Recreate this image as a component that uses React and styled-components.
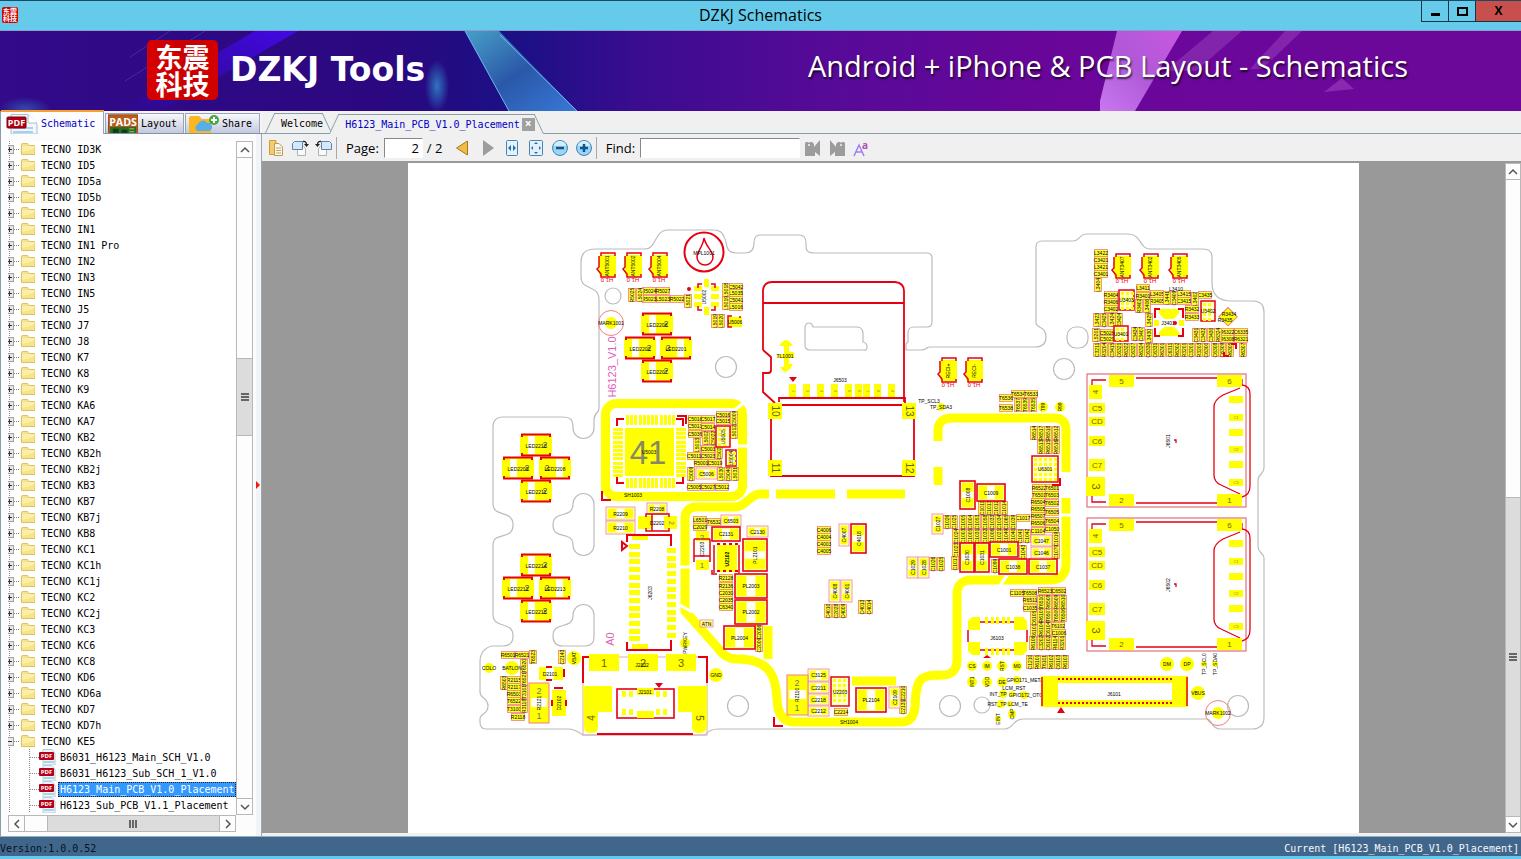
import React from "react";
import styled, { createGlobalStyle, css } from "styled-components";

const MONO = '"DejaVu Sans Mono", "Liberation Mono", monospace';
const UI = '"Open Sans", "Noto Sans", sans-serif';
const CJK = '"Noto Sans CJK SC", sans-serif';
const Y = "#ffff00";
const RED = "#e60012";
const PINK = "#f08080";

const Global = createGlobalStyle`
  * { box-sizing: border-box; }
  body { margin: 0; font: 10px ${MONO}; color: #000; background: #64c9ec; }
  button { font: inherit; color: inherit; border: 0; padding: 0; background: none; }
  ul { list-style: none; margin: 0; padding: 0; }
  h1, h2, p { margin: 0; font-weight: 400; }
`;

/* ---------- window frame ---------- */

const Window = styled.div`
  display: flex;
  flex-direction: column;
  height: 100vh;
  min-height: 480px;
  overflow: hidden;
`;

const TitleBar = styled.header`
  display: grid;
  grid-template-columns: 100px 1fr 100px;
  height: 31px;
  flex: none;
  border-top: 1px solid #1c4a66;
  border-bottom: 1px solid #8a9cc8;
  background: #66cbeb;
`;

const Seal = styled.span`
  display: flex;
  flex-wrap: wrap;
  align-content: center;
  justify-content: center;
  width: ${(p) => p.$size}px;
  height: ${(p) => p.$height}px;
  border-radius: ${(p) => p.$radius}px;
  background: linear-gradient(90deg, #d80000, #c80000 60%, #d40000);
  color: #fff;
  font: 700 ${(p) => p.$font}px/${(p) => p.$line}px ${CJK};
  text-align: center;
  padding: 0 ${(p) => p.$pad}px;
`;

const AppMark = styled.div`
  padding: 6px 0 0 2px;
`;

const WindowTitle = styled.h1`
  font: 16px/29px ${UI};
  text-align: center;
`;

const WindowButtons = styled.div`
  display: flex;
  height: 21px;
`;

const WindowButton = styled.button`
  flex: ${(p) => (p.$close ? "1" : "0 0 27px")};
  display: flex;
  align-items: center;
  justify-content: center;
  border: 1px solid #143448;
  border-width: 0 0 1px 1px;
  background: ${(p) => (p.$close ? "#c7504c" : "transparent")};
  font: 700 12px/18px ${UI};
`;

const Banner = styled.section`
  position: relative;
  flex: none;
  display: flex;
  align-items: center;
  height: 80px;
  padding: 0 113px 2px 147px;
  background: linear-gradient(90deg, #320a8a 0, #2b0880 25%, #1b1085 34%, #3a0c90 42%, #560a98 54%, #6a069a 70%, #6c0899 100%);
  color: #fff;
  overflow: hidden;
`;

const BannerArt = styled.svg`
  position: absolute;
  inset: 0;
  width: 100%;
  height: 100%;
`;

const Brand = styled.h2`
  position: relative;
  margin: 0 auto 0 12px;
  font: 700 33px/78px "DejaVu Sans", sans-serif;
`;

const Slogan = styled.p`
  position: relative;
  font: 29px/70px ${UI};
  height: 78px;
  text-shadow: 1px 2px 2px rgba(0, 0, 0, 0.7);
  white-space: nowrap;
`;

const SealHolder = styled.div`
  position: relative;
`;

const Workspace = styled.main`
  flex: 1;
  min-height: 0;
  display: grid;
  grid-template-columns: 256px 6px minmax(0, 1fr);
  background: #f0f0f0;
`;

const StatusBar = styled.footer`
  flex: none;
  display: flex;
  justify-content: space-between;
  height: 23px;
  padding: 4px 2px 0 0;
  border-top: 1px solid #8fb0c4;
  border-bottom: 3px solid #64c9ec;
  background: #41668c;
  line-height: 16px;
  color: #06121e;
`;

const StatusDocument = styled.span`
  color: #f4f8fc;
`;

/* ---------- scroll bars ---------- */

const ScrollBar = styled.div`
  display: flex;
  flex-direction: ${(p) => (p.$horizontal ? "row" : "column")};
  ${(p) => (p.$horizontal ? "height" : "width")}: ${(p) => p.$thick}px;
  border: 1px solid #b8b8b8;
  background: #fdfdfd;
`;

const ScrollArrow = styled.button`
  flex: 0 0 16px;
  display: flex;
  align-items: center;
  justify-content: center;
  border: 0 solid #b8b8b8;
  ${(p) =>
    ({
      up: css`border-bottom-width: 1px;`,
      down: css`border-top-width: 1px;`,
      left: css`border-right-width: 1px;`,
      right: css`border-left-width: 1px;`,
    })[p.$dir]}
`;

const ScrollSpace = styled.span`
  flex: ${(p) => p.$grow} 1 0;
`;

const ScrollThumb = styled.span`
  flex: ${(p) => p.$grow} 1 0;
  display: flex;
  align-items: center;
  justify-content: center;
  background: #dcdcdc;
  outline: 1px solid #b8b8b8;
`;

const turn = { up: 0, right: 90, down: 180, left: 270 };

function Arrow({ dir }) {
  return (
    <ScrollArrow $dir={dir} aria-label={`Scroll ${dir}`}>
      <svg width="10" height="10" viewBox="0 0 10 10">
        <path d="M1 7 5 3 9 7" fill="none" stroke="#555" strokeWidth="1.5" transform={`rotate(${turn[dir]} 5 5)`} />
      </svg>
    </ScrollArrow>
  );
}

function Scroller({ horizontal, thick = 17, before, thumb, after }) {
  return (
    <ScrollBar $horizontal={horizontal} $thick={thick}>
      <Arrow dir={horizontal ? "left" : "up"} />
      {before > 0 && <ScrollSpace $grow={before} />}
      <ScrollThumb $grow={thumb}>
        <svg width="8" height="8" viewBox="0 0 8 8">
          <path d={horizontal ? "M1 0V8M4 0V8M7 0V8" : "M0 1H8M0 4H8M0 7H8"} stroke="#666" strokeWidth="2" />
        </svg>
      </ScrollThumb>
      {after > 0 && <ScrollSpace $grow={after} />}
      <Arrow dir={horizontal ? "right" : "down"} />
    </ScrollBar>
  );
}

/* ---------- left panel ---------- */

const SidePanel = styled.aside`
  display: flex;
  flex-direction: column;
  min-height: 0;
  border-left: 1px solid #8a9ca8;
  background: #fcfcfc;
`;

const SideTabs = styled.div`
  display: flex;
  align-items: flex-end;
  gap: 1px;
  height: 23px;
  flex: none;
  margin-right: -6px;
  border-bottom: 1px solid #8096a8;
  background: #f4f4f8;
`;

const SideTab = styled.button`
  position: relative;
  display: flex;
  align-items: center;
  gap: 3px;
  height: ${(p) => (p.$active ? 23 : 20)}px;
  width: ${(p) => p.$width}px;
  padding-left: ${(p) => (p.$active ? 5 : 2)}px;
  border: 1px solid #9aa4b8;
  border-bottom: 0;
  background: linear-gradient(#f8f8fc, #c4c8dc);
  overflow: hidden;
  white-space: nowrap;
  ${(p) =>
    p.$active &&
    css`
      border: 0;
      border-top: 2px solid #f5a030;
      border-right: 1px solid #9aa4b8;
      background: #fcfcff;
      color: #0000c8;
      margin-bottom: -1px;
      height: 24px;
    `}
`;

const TreeArea = styled.div`
  flex: 1;
  min-height: 0;
  display: grid;
  grid-template-columns: minmax(0, 1fr) 17px;
  grid-template-rows: minmax(0, 1fr) 17px;
  margin: 7px 3px 4px 7px;
`;

const Tree = styled.ul`
  overflow: hidden;
  background: #fff;
`;

const TreeRow = styled.li`
  display: flex;
  align-items: center;
  height: 16px;
  padding-left: ${(p) => (p.$child ? 20 : 0)}px;
  background: repeating-linear-gradient(#888 0 1px, transparent 1px 2px) 1px 0 / 1px 100% no-repeat;
`;

const TreeLabel = styled.button`
  height: 15px;
  padding: 0 1px 0 2px;
  margin-left: ${(p) => (p.$child ? 0 : 4)}px;
  line-height: 15px;
  white-space: nowrap;
  ${(p) =>
    p.$selected &&
    css`
      background: #3399ff;
      color: #fff;
      outline: 1px dotted #222;
      outline-offset: -1px;
    `}
`;

const Splitter = styled.div`
  display: flex;
  align-items: center;
  margin-top: 23px;
  background: #f2f4f8;
  border-right: 1px solid #98a8b4;
`;

const names =
  "ID3K,ID5,ID5a,ID5b,ID6,IN1,IN1 Pro,IN2,IN3,IN5,J5,J7,J8,K7,K8,K9,KA6,KA7,KB2,KB2h,KB2j,KB3,KB7,KB7j,KB8,KC1,KC1h,KC1j,KC2,KC2j,KC3,KC6,KC8,KD6,KD6a,KD7,KD7h,KE5".split(",");
const files = [
  "B6031_H6123_Main_SCH_V1.0",
  "B6031_H6123_Sub_SCH_1_V1.0",
  "H6123_Main_PCB_V1.0_Placement",
  "H6123_Sub_PCB_V1.1_Placement",
];

function FolderIcon({ open }) {
  return (
    <svg width="27" height="16" viewBox="0 0 27 16">
      <rect x="-3.500" y="4.500" width="9" height="8" fill="#e8e8e8" stroke="#a0a0a0" />
      <path d={open ? "M0 8.500H4" : "M0 8.500H4M1.500 6V11"} stroke="#333" />
      <path d="M6 8.500H12" stroke="#888" strokeDasharray="1 1" />
      <path d="M13.500 3.500q0-1 1-1H19q1 0 1.500 1l.5 1h5q1 0 1 1v8H13.500Z" fill="#f6e488" stroke="#dcc464" />
      <path d="M14.500 5H26V8L14.500 11Z" fill="#fff4b8" opacity=".7" />
    </svg>
  );
}

function PdfFileIcon({ large }) {
  return large ? (
    <svg width="32" height="21" viewBox="0 0 32 21">
      <path d="M5 1.500H22L31 11V21H5Z" fill="#f3f7fb" stroke="#a8c0d0" />
      <path d="M22 1.500V10H31" fill="#fff" stroke="#a8c0d0" />
      <path d="M7 15H27M7 19H27" stroke="#a6d0f0" strokeWidth="2" />
      <rect x="1" y="4" width="19" height="11" rx="1" fill="#b40012" stroke="#7c0010" />
      <text x="10.500" y="13" fontSize="9" fontWeight="700" textAnchor="middle" fill="#fff" fontFamily="Open Sans">PDF</text>
    </svg>
  ) : (
    <svg width="30" height="16" viewBox="0 0 30 16">
      <path d="M1.500 0V16M2 8.500H12" stroke="#888" strokeDasharray="1 1" />
      <path d="M15 .5H24L27 4V16H15Z" fill="#eaf4fa" stroke="#b4ccd8" />
      <path d="M16 13H26" stroke="#a8d4f0" strokeWidth="2" />
      <rect x="11" y="3" width="15" height="8" rx="1" fill="#b80014" />
      <text x="18.500" y="9" fontSize="6" fontWeight="700" textAnchor="middle" fill="#fff" fontFamily="Open Sans">PDF</text>
    </svg>
  );
}

function PadsIcon() {
  return (
    <svg width="30" height="20" viewBox="0 0 31 20">
      <rect x=".5" y=".5" width="30" height="20" fill="#b85c1c" stroke="#98501c" />
      <rect x="2" y="13" width="27" height="7" fill="#2c6c24" />
      <path d="M5 15H11V20H5ZM14 16H20V20H14Z" fill="#123c14" />
      <path d="M22 15H27M22 18H27" stroke="#a0cc50" />
      <text x="15.500" y="12" fontSize="11" fontWeight="700" textAnchor="middle" fill="#fff" fontFamily="Open Sans">PADS</text>
    </svg>
  );
}

function CloudFolderIcon() {
  return (
    <svg width="31" height="20" viewBox="0 0 31 20">
      <path d="M1 4q0-2 2-2h8l3 3h7q2 0 2 2v13H1Z" fill="#fcb720" />
      <path d="M9 17a4 4 0 0 1 1-7 5 5 0 0 1 9-1 4 4 0 0 1 2 8Z" fill="#58aee8" />
      <circle cx="26" cy="6" r="5" fill="#48a840" />
      <path d="M26 3V9M23 6H29" stroke="#fff" strokeWidth="2" />
    </svg>
  );
}

/* ---------- document area ---------- */

const DocArea = styled.section`
  display: flex;
  flex-direction: column;
  min-height: 0;
  margin-bottom: 3px;
`;

const DocTabs = styled.div`
  display: flex;
  align-items: flex-end;
  height: 23px;
  flex: none;
  padding-left: 3px;
  border-bottom: 1px solid #8aa0a8;
`;

const DocTab = styled.button`
  position: relative;
  isolation: isolate;
  display: flex;
  align-items: center;
  gap: 2px;
  height: 20px;
  padding: 1px 9px 0 16px;
  margin-left: ${(p) => (p.$active ? -3 : 0)}px;
  margin-bottom: ${(p) => (p.$active ? -1 : 0)}px;
  color: ${(p) => (p.$active ? "#0000c8" : "#000")};
  white-space: nowrap;

  &::before,
  &::after {
    content: "";
    position: absolute;
    z-index: -1;
    top: 0;
    bottom: 0;
    width: 52%;
    border-top: 1px solid #8aa0a8;
    background: #f0f0f0;
    transform-origin: bottom;
  }
  &::before {
    left: 0;
    border-left: 1px solid #8aa0a8;
    transform: skewX(-25deg);
  }
  &::after {
    right: 0;
    border-right: 1px solid #8aa0a8;
    transform: skewX(25deg);
  }
`;

const CloseMark = styled.span`
  width: 13px;
  height: 13px;
  background: #a0a0a0;
  color: #fff;
  font: 700 12px/12px ${UI};
  text-align: center;
`;

const ToolBar = styled.div`
  display: flex;
  align-items: center;
  flex: none;
  height: 29px;
  padding-left: 2px;
  border-bottom: 2px solid #999;
  background: #f0f0f0;
  font: 13px/20px ${UI};
`;

const ToolButton = styled.button`
  display: flex;
  align-items: center;
  justify-content: center;
  width: 24px;
  height: 24px;
`;

const Divider = styled.span`
  width: 1px;
  height: 22px;
  background: #a8a8a8;
  margin-right: 9px;
`;

const Field = styled.label`
  display: flex;
  align-items: center;
  gap: 5px;
`;

const TextBox = styled.input`
  width: ${(p) => p.$width}px;
  height: 20px;
  padding: 0 3px;
  border: 1px solid #888;
  border-right-color: #fff;
  border-bottom-color: #fff;
  background: #fff;
  font: 13px/18px ${UI};
  text-align: ${(p) => (p.$right ? "right" : "left")};
`;

const PageCount = styled.span`
  width: 27px;
  padding-left: 4px;
`;

const Gap = styled.span`
  width: ${(p) => p.$w}px;
`;

const Viewer = styled.div`
  flex: 1;
  min-height: 0;
  display: flex;
  background: #999;
`;

const Sheet = styled.div`
  flex: 1;
  min-width: 0;
  margin: 0 146px;
  background: #fff;
  overflow: hidden;
`;

const Drawing = styled.svg`
  display: block;
  width: 100%;
  font-family: "Liberation Sans Narrow", "Liberation Sans", sans-serif;
`;

/* ---------- tool bar icons ---------- */

const I = ({ children }) => (
  <svg width="18" height="18" viewBox="0 0 18 18">
    {children}
  </svg>
);
const pageBox = { fill: "#e4f1fb", stroke: "#4684b4" };

const CopyIcon = () => (
  <I>
    <path d="M2.500 1.500H9V15.500H2.500Z" fill="#f4cc70" stroke="#d09c38" />
    <path d="M7.500 4.500H12L15.500 8V16.500H7.500Z" fill="#fbf7e4" stroke="#b89c58" />
    <path d="M9 9H14M9 11.500H14M9 14H14" stroke="#c0a468" />
  </I>
);
const TurnIcon = ({ flip }) => (
  <I>
    <g transform={flip ? "matrix(-1 0 0 1 18 0)" : undefined}>
      <path d="M6.500 7.500H12.500L14.500 9.500V16.500H6.500Z" fill="#fafafa" stroke="#b0b0b0" />
      <path d="M3.500 2.500H11.500V10.500H1.500V4.500Z" fill="#d6e8f8" stroke="#5c84ac" />
      <path d="M12 2.500Q15.500 2 15.500 6" fill="none" stroke="#222" strokeWidth="1.300" />
      <path d="M13 5H18L15.500 8Z" fill="#222" />
    </g>
  </I>
);
const FitIcon = ({ all }) => (
  <I>
    <rect x={all ? 2.500 : 3.500} y="1.500" width={all ? 13 : 11} height="15" rx="1" {...pageBox} />
    {all ? (
      <path d="M7 5 9 3 11 5ZM7 13 9 15 11 13ZM6 7 4 9 6 11ZM12 7 14 9 12 11Z" fill="#286ca4" />
    ) : (
      <path d="M8 6 5 9 8 12ZM10 6 13 9 10 12Z" fill="#286ca4" />
    )}
  </I>
);
const ZoomIcon = ({ plus }) => (
  <I>
    <circle cx="9" cy="9" r="7.500" fill="#9cd2f4" stroke="#3c88b8" />
    <path d="M3 7a6 5 0 0 1 12 0Z" fill="#d4eefc" />
    <path d={plus ? "M5 9H13M9 5V13" : "M5 9H13"} stroke="#0c5890" strokeWidth="2.500" />
  </I>
);
const BinocularIcon = ({ flip }) => (
  <I>
    <g transform={flip ? "matrix(-1 0 0 1 18 0)" : undefined} fill="#9c9c9c">
      <path d="M1 4 2 3H4L5 4 6 3H8L10 5V8L16 1V17L11 13V17H1Z" />
      <circle cx="5" cy="6" r="1" fill="#f0f0f0" />
    </g>
  </I>
);

/* ---------- board drawing ---------- */

const T = ({ x, y, s = 5, r = 0, fill = "#000", w = 400, children }) => (
  <text x={x} y={y} fontSize={s} fontWeight={w} fill={fill} textAnchor="middle" dominantBaseline="central" transform={r ? `rotate(${r} ${x} ${y})` : undefined}>
    {children}
  </text>
);
const P = ({ x, y, w, h, rx = 0 }) => <rect x={x} y={y} width={w} height={h} rx={rx} fill={Y} />;
const Red = ({ d, w = 1.500, fill = "none" }) => <path d={d} fill={fill} stroke={RED} strokeWidth={w} />;

/* small passives: "x,y,label" separated by blanks */
const parse = (s) => s.trim().split(/\s+/).map((e) => e.split(","));

const flat = parse(`649,291,R5024 663,291,R5027 649,299,R5023 663,299,L5023 677,299,R5022 736,287,C5042 736,293,L5035 736,300,C5041 736,307,L5016
695,419,C5018 708,419,C5017 723,415,C5016 723,421,C5015 695,426,C5013 708,427,C5014 695,434,C5036 708,449,C5003 694,456,C5011 708,456,C5023
701,463,R5001 715,463,C5019 694,487,C5005 708,487,C5027 722,487,C5012
1101,253,L3422 1101,260,C3421 1101,267,L3421 1101,274,C3401 1111,295,R3404 1111,302,R3406 1111,309,C3402 1143,288,L3411 1143,296,R3401 1157,294,L3405 1157,301,R3405
1184,294,L3415 1184,301,C3415 1205,295,C3435 1192,309,R3432 1192,317,R3433 1107,333,C5028 1107,339,C5029 1227,332,R6322 1241,332,C6335 1227,339,R6308 1241,339,R6321
1018,394,T6534 1031,394,T6533 1006,398,T6536 1006,408,T6538 1039,488,R6522 1052,488,T6501 1039,495,T6501 1052,495,T6503 1038,502,R6504 1052,503,T6502
1038,509,R6505 1052,512,T6505 1038,516,R6507 1052,521,T6504 1038,523,R6506 1038,531,C1104 1052,529,C1050 1023,518,C1017
824,530,C4006 824,537,C4004 824,544,C4003 824,551,C4005 1030,593,T6508 1017,593,C1105 1045,591,R6523 1059,591,C6502 1030,600,R6511 1030,608,C1035 1058,626,T6102 1059,633,C1006
700,520,L6501 700,527,C2029 714,522,T6532 726,578,R2128 726,586,R2136 726,593,C2030 726,600,C2035 726,607,C6340
508,655,R6501 522,655,R6521 514,680,R2115 514,687,R2117 514,694,R6503 514,701,T6522 514,709,T3100 518,717,R2118 841,712,C2214`);

const row = (y, xs, labels) => labels.split(" ").map((l, i) => [xs[i], y, l]);
const step = (x, d, n) => Array.from({ length: n }, (_, i) => Math.round(x + d * i));

const upright = [
  ...parse(`632,295,R5025 640,295,L5024 688,301,L5021 726,290,L5018 726,303,L5019 715,321,L5019 721,321,L5020
697,445,L5013 706,438,L5002 713,438,C5022 734,418,C5009 734,432,L5012 719,452,C5025 691,474,C5009 721,474,L5030 728,474,C5040 735,474,L5031
1098,285,L3404 1139,306,R3402 1147,306,L3406 1167,298,L3441 1174,298,C3409 1195,299,L3402 1097,320,L3423 1104,320,C3425 1112,320,L3424 1119,320,C3424 1149,320,L3425
1096,335,L5201 1135,334,C3434 1141,334,C3407 1149,336,L3430 1196,335,C3431 1203,335,C3432 1211,335,C3430 1218,335,R6324 1215,350,C6308 1222,350,C6309 1230,350,R6305 1243,350,R6307
1018,405,T6537 1025,405,T6539 1033,405,T6535 1034,433,R6514 1041,433,R6517 1048,433,R6518 1056,433,R6512 1041,447,R6513 1048,447,R6515 1056,447,R6516
1013,522,C1039 1013,536,C1040 1020,536,C1041 1027,536,C1042 1056,539,C1019 1056,552,C1079 1023,552,C1043 995,566,C1099
947,522,C1026 954,522,C1025 956,536,C1024 956,550,C1023 955,563,C1017 933,564,C1026 941,564,C1025
828,611,C4010 836,611,C2028 843,611,C4009 862,607,C4013 869,607,C4014
1034,618,C6105 1034,631,C6101 759,632,C2086 759,645,C2009 533,657,T6523 562,657,C2143 524,666,T6520 524,679,T6521 504,683,R6503 524,692,T3101 524,706,R3118 903,707,C2131 903,693,C2210`),
  ...row(350, step(1097, 7.25, 16), "C3211 R3204 C3415 C6321 R6322 C6327 R6324 C6330 C6331 R6301 C6311 R6302 R3201 C3201 R3203 C6300"),
  ...row(508, step(982, 7.2, 4), "C1011 C1013 C1012 C1014"),
  ...row(522, step(963, 7.2, 7), "C1005 C1004 C1053 C1058 C1033 C1034 C1065"),
  ...row(536, step(963, 7.2, 7), "C1003 C1005 C1031 C1032 C1006 C1021 C1049"),
  ...row(602, [1041, 1048, 1056, 1063], "T6510 R6508 R6509 R6510"),
  ...row(615, [1041, 1048, 1056, 1063], "R6105 T6507 T6509 T6506"),
  ...row(629, [1041, 1048], "R6104 C6104"),
  ...row(643, [1033, 1041, 1048, 1055, 1062], "R6106 C3202 C6102 R6114 R3201"),
  ...row(662, step(1030, 7, 6), "C1210 R6101 T6101 R6102 C6103 R6103"),
];

/* labelled two-terminal parts: x, y, w, h, label, outline, upright */
const blocks = [
  [696, 468, 21, 11, "C5006", 0, 0], [606, 507, 29, 13, "R2209", 0, 0], [606, 521, 29, 13, "R2210", 0, 0],
  [647, 503, 20, 11, "R2208", 0, 0], [721, 515, 20, 11, "C6503", 0, 0], [712, 527, 28, 14, "C2131", 1, 0],
  [747, 526, 21, 11, "C2130", 0, 0], [743, 539, 24, 32, "PL2101", 1, 1], [735, 574, 32, 24, "PL2003", 1, 0],
  [735, 600, 32, 24, "PL2002", 1, 0], [724, 626, 31, 23, "PL2004", 1, 0], [960, 481, 15, 28, "C1008", 1, 1],
  [977, 484, 28, 17, "C1009", 1, 0], [932, 514, 11, 20, "C1027", 0, 1], [839, 524, 10, 22, "C4007", 0, 1],
  [851, 524, 15, 29, "C4018", 1, 1], [907, 557, 11, 21, "C1029", 0, 1], [918, 557, 11, 21, "C1028", 0, 1],
  [829, 580, 11, 22, "C4008", 0, 1], [841, 580, 11, 22, "C4001", 0, 1], [960, 543, 14, 29, "C1030", 1, 1],
  [975, 543, 14, 29, "C1031", 1, 1], [990, 542, 28, 15, "C1001", 1, 0], [999, 559, 28, 15, "C1038", 1, 0],
  [1029, 559, 28, 15, "C1037", 1, 0], [1031, 535, 21, 11, "C1047", 0, 0], [1031, 547, 21, 11, "C1046", 0, 0],
  [808, 669, 21, 12, "C3125", 0, 0], [808, 682, 21, 11, "C2211", 0, 0], [808, 694, 21, 11, "C2218", 0, 0],
  [808, 706, 21, 10, "C2212", 0, 0], [856, 688, 30, 24, "PL2104", 1, 0], [889, 687, 11, 21, "C2109", 0, 1],
  [700, 620, 13, 7, "ATN", 0, 0],
];

const dots = [
  [1043, 407, 5, "T99", 1], [1060, 407, 5, "R99", 1], [972, 666, 5, "CS"], [987, 666, 5, "IM"], [1002, 666, 5, "RST", 1], [1017, 666, 5, "M0"],
  [972, 682, 5, "INT1", 1], [987, 682, 5, "VDD", 1], [1002, 682, 5, "DE"], [1167, 664, 7, "DM"], [1187, 664, 7, "DP"], [1198, 693, 7, "VBUS"],
  [716, 675, 7, "GND"], [574, 658, 7, "VBAT", 1], [489, 668, 5, "COLO"], [512, 668, 7, "BATLON"], [685, 643, 5, "PWRKEY", 1],
  [1204, 664, 3, "TP_SCL0", 1], [1215, 664, 3, "TP_SDA0", 1], [1012, 714, 4, "CMP", 1], [998, 719, 3, "EINT", 1], [941, 407, 4, "TP_SDA3"],
  [1017, 680, 4, ""], [1012, 694, 3, ""], [1003, 694, 4, ""], [1024, 695, 4, ""], [1001, 704, 4, ""], [1010, 704, 3, ""],
];

const captions = [
  [929, 401, "TP_SCL3"], [1025, 680, "GPIO171_META"], [1014, 688, "LCM_RST"], [998, 694, "INT_TP"],
  [1026, 695, "GPIO172_OTG"], [997, 704, "RST_TP"], [1018, 704, "LCM_TE"], [1176, 289, "L3410"],
];

const leds = [
  [657, 324, "LED2206"], [640, 348, "LED2202"], [676, 348, "LED2201"], [657, 371, "LED2207"],
  [536, 445, "LED2210"], [518, 468, "LED2209"], [555, 468, "LED2208"], [536, 491, "LED2211"],
  [536, 565, "LED2214"], [518, 588, "LED2212"], [555, 588, "LED2213"], [536, 611, "LED2215"],
];

const antennas = [
  [607, 265, "ANT5001"], [633, 265, "ANT5002"], [659, 265, "ANT5004"], [1122, 266, "ANT3407"], [1150, 266, "ANT3402"], [1179, 266, "ANT3405"],
  [948, 370, "RECI+"], [974, 370, "RECI-"],
];

function Led({ x, y, label, mirror }) {
  return (
    <g>
      <P x={x - 16} y={y - 10} w={32} h={20} rx={2} />
      <rect x={mirror ? x + 1 : x - 8} y={y - 9} width={7} height={18} fill="#fffff0" />
      <Red d={`M${x - 14} ${y - 8}V${y - 10.5}H${x + 14}V${y - 8}M${x - 14} ${y + 8}V${y + 10.5}H${x + 14}V${y + 8}`} w={2} />
      <T x={x + (mirror ? -8 : 9)} y={y} s={9} fill="#555">2</T>
      <T x={x} y={y + 1}>{label}</T>
    </g>
  );
}

function Antenna({ x, y, label }) {
  return (
    <g>
      <P x={x - 8} y={y - 10} w={17} h={21} rx={2} />
      <Red d={`M${x - 6} ${y - 9}V${y - 12}H${x + 8}V${y - 9}M${x - 8} ${y - 9}V${y + 2}L${x - 10} ${y + 4}L${x - 6} ${y + 9}V${y + 12}H${x + 8}V${y + 9}`} />
      <T x={x} y={y + 1} r={-90}>{label}</T>
      <T x={x} y={y + 15} r={180} s={6} fill={RED}>H1.0</T>
    </g>
  );
}

function Chip({ x, y, w, h, label, r }) {
  const cols = step(x + 3, 5, Math.floor(w / 5));
  return (
    <g>
      <rect x={x} y={y} width={w} height={h} fill="#ffffd0" stroke={RED} strokeWidth="1.500" />
      {cols.map((c) => step(y + 3, 5, Math.floor(h / 5)).map((q) => <P key={`${c}-${q}`} x={c - 1} y={q - 1} w={3} h={3} />))}
      <T x={x + w / 2} y={y + h / 2} r={r}>{label}</T>
    </g>
  );
}

function Socket({ y, label }) {
  const pads = [
    [22, 1, 25, 12, "5"], [130, 1, 25, 12, "6"], [2, 11, 13, 14, "4", -90], [2, 29, 16, 10, "C5"], [2, 43, 16, 9, "CD"], [2, 62, 16, 10, "C6"],
    [2, 85, 16, 12, "C7"], [-1, 103, 19, 19, "3", 90], [22, 120, 25, 12, "2"], [130, 120, 25, 12, "1"],
  ];
  return (
    <g transform={`translate(1087 ${y})`}>
      <rect x="0" y="0" width="159" height="133" fill="none" stroke="#e05060" />
      <Red d="M49 4H130M49 129H130M5 11V6H19M5 122V128H19M153 14 136 21Q127 26 127 33V101Q127 108 134 111L153 120M155 5V11Q163 12 163 20V112Q163 121 155 123M87 66H89V69" w={1.3} />
      {pads.map(([a, b, w, h, l, r]) => (
        <g key={l}>
          <P x={a} y={b} w={w} h={h} />
          <T x={a + w / 2} y={b + h / 2} s={h > 18 ? 11 : 8} r={r} fill="#776600">{l}</T>
        </g>
      ))}
      {[25, 43, 58, 75, 90, 108].map((c, i) => (
        <g key={c}>
          <P x={142} y={c - 3} w={14} h={7} />
          {i % 2 === 1 && <T x={149} y={c} s={4} fill="#886">{`C${(i + 1) / 2}`}</T>}
        </g>
      ))}
      <T x={81} y={67} r={-90}>{label}</T>
    </g>
  );
}

function Board() {
  return (
    <Drawing viewBox="408 163 951 671" role="img" aria-label="H6123 main board placement">
      <g fill="none" stroke="#bcbcbc" strokeWidth="1.200">
        <path d="M486 729H570Q576 730 583 735H705Q710 729 718 729H1005C1013 729 1013 719 1023 719H1207C1212 719 1211 729 1220 729H1252Q1264 729 1264 717V558C1264 553 1258 553 1258 547V480C1258 474 1264 474 1264 468V312Q1264 301 1253 301H1232Q1212 301 1212 283V257Q1212 249 1203 249H1150C1139 249 1142 234 1128 234H1087C1079 234 1080 241 1073 241H1042Q1036 241 1036 247V323C1036 328 1046 326 1046 337Q1046 347 1035 347H930C926 347 927 350 921 350H906V344L908 342V333Q908 327 914 327H927Q932 327 932 322V258Q932 253 927 253H815C805 253 806 249 806 243Q806 235 799 235H760Q754 235 754 243 754 253 745 253H736C724 253 728 242 724 237Q722 230 714 230H668C654 230 657 249 645 249H595Q581 249 581 262V277C581 291 599 284 599 300V408C599 414 594 412 594 420V428A10.500 10.500 0 0 1 573 428C573 420 571 417 562 417H503Q493 417 493 427V504C493 518 513 509 513 525S493 531 493 545V614C493 630 513 620 513 636Q513 646 503 646H492Q480 649 480 662V692C480 699 488 697 488 706S480 713 480 719V722Q480 729 486 729Z" />
        <path d="M594 504V545A10.500 10.500 0 0 1 573 545C573 530 553 541 553 525S573 520 573 504A10.500 10.500 0 0 1 594 504Z" />
        <path d="M594 615V637Q594 646 585 646H563Q553 646 553 636C553 620 573 631 573 615A10.500 10.500 0 0 1 594 615Z" />
        <path d="M805 345V327Q806 323 809 323T813 327H857Q863 327 863 334V342Q867 343 867 347T863 350H810Q805 350 805 345Z" />
        <rect x="1067" y="327" width="21" height="21" rx="9" />
        {[[613, 296, 8], [726, 367, 10.5], [738, 706, 10.5], [950, 706, 10.5], [982, 705, 8], [1238, 706, 10.5], [1064, 369, 10.5]].map(([x, y, r]) => (
          <circle key={x} cx={x} cy={y} r={r} />
        ))}
      </g>

      <g fill="none" stroke={Y} strokeWidth="9">
        <rect x="605.500" y="403.500" width="137" height="93" rx="11" />
        <path d="M769 494H760C750 494 746 507 735 507H697Q685 507 685 519V611L717 647Q725 659 737 659C770 659 776 676 777 700Q778 722 795 722H901Q914 722 915 706C916 680 920 675 937 675Q957 677 957 660V594Q957 580 972 580H1050Q1066 580 1066 564V498M1066 472V430Q1066 418 1054 418H952Q938 418 938 431V441M938 467V485M776 494H835M847 494H905M768 626V659" />
        <path d="M852 681H896" />
      </g>
      <path d="M732 412 749 399M737 446H750M679 567H692M678 604 692 612M998 588 1009 573M930 478 934 488M1060 515H1072" stroke="#fff" strokeWidth="3" />

      <circle cx="704" cy="252" r="19.500" fill="none" stroke={RED} strokeWidth="2" />
      <path d="M704 238C706 247 713 251 713 257A8 8 0 0 1 697 257C697 251 703 247 704 238Z" fill="none" stroke={RED} strokeWidth="1.500" />
      <T x={704} y={253}>MPL1001</T>
      {[[611, 323, "MARK1001"], [1218, 713, "MARK1002"]].map(([x, y, l]) => (
        <g key={l}>
          <circle cx={x} cy={y} r="12.500" fill="none" stroke={PINK} />
          <circle cx={x} cy={y} r="6" fill={Y} />
          <T x={x} y={y}>{l}</T>
        </g>
      ))}
      <T x={612} y={367} r={-90} s={11} fill="#e060b8">H6123_V1.0</T>
      <T x={610} y={639} r={-90} s={11} fill="#e060b8">A0</T>

      {leds.map(([x, y, l], i) => <Led key={l} x={x} y={y} label={l} mirror={i % 4 === 2} />)}
      {antennas.map(([x, y, l]) => <Antenna key={l} x={x} y={y} label={l} />)}

      {/* U5003 and its pin ring */}
      <P x={625} y={428} w={49} h={48} />
      {step(628, 4.2, 12).map((x) => <g key={x}><P x={x - 2} y={415} w={3} h={10} /><P x={x - 2} y={478} w={3} h={10} /></g>)}
      {step(429, 4.2, 12).map((y) => <g key={y}><P x={613} y={y - 1} w={10} h={3} /><P x={676} y={y - 1} w={10} h={3} /></g>)}
      <Red d="M617 426V419H624M676 419H683V426M617 477V483H624M676 483H683V477M677 416H686V424" w={2} />
      <T x={648} y={452} s={33} fill="#888866">41</T>
      <T x={649} y={452}>U5003</T>
      <T x={633} y={495}>SH1003</T>
      <Red d="M602 491V500H611M774 717V726H783" w={2} />
      <T x={849} y={722}>SH1004</T>

      {/* U5002 */}
      {[[694, 286], [694, 294], [694, 302], [711, 286], [711, 294], [711, 302]].map(([x, y]) => <P key={`${x}-${y}`} x={x} y={y} w={8} h={5} rx={1} />)}
      <P x={704} y={279} w={5} h={8} /><P x={704} y={307} w={5} h={8} />
      <Red d="M698 288V284H702M711 284H715V288M698 306V310H702M711 310H715V306" />
      <circle cx="689" cy="289" r="2" fill={RED} />
      <T x={704} y={297} r={-90}>U5002</T>
      <P x={729} y={317} w={13} h={10} /><Red d="M732 316H728V327H732M740 316V318" /><T x={735} y={322}>U5006</T>

      {/* card holder J6503 */}
      <Red d="M763 350V290Q764 282 772 282H895Q904 283 904 291V402M763 303H904M763 350 771 357V370Q771 373 768 373H763V392L775 403M779 402V398H905V406M771 405H914V476H771Z" w={1.8} />
      {[793, 807, 821, 835, 849, 859, 867, 878, 892].map((x, i) => (
        <g key={x}><P x={x - 4} y={384} w={7} h={13} /><T x={x} y={391} r={90} s={4} fill="#886">{i + 1}</T></g>
      ))}
      {[[768, 403, "10"], [902, 403, "13"], [768, 460, "11"], [902, 460, "12"]].map(([x, y, l]) => (
        <g key={l}><P x={x} y={y} w={14} h={16} /><T x={x + 7} y={y + 8} s={10} r={90} fill="#666600">{l}</T></g>
      ))}
      <path d="M779 346Q786 334 793 346H789V352H794V358H789V364H793Q786 378 780 367H784V358H776L780 354H784V346Z" fill={Y} />
      <T x={785} y={356}>TL1001</T><T x={840} y={380}>J6503</T>
      <path d="M789 377H797L793 382ZM1057 713 1061 707 1065 713ZM655 683H663L659 688ZM983 658H991L987 655Z" fill={RED} />

      {flat.map(([x, y, l], i) => (
        <g key={i}><rect x={+x - 6.5} y={+y - 3.5} width="13" height="7" fill="#ffff30" stroke={PINK} strokeWidth=".8" /><T x={+x} y={+y}>{l}</T></g>
      ))}
      {upright.map(([x, y, l], i) => (
        <g key={i}><rect x={+x - 3.5} y={+y - 6.5} width="7" height="13" fill="#ffff30" stroke={PINK} strokeWidth=".8" /><T x={+x} y={+y} r={-90}>{l}</T></g>
      ))}
      {blocks.map(([x, y, w, h, l, strong, up]) => (
        <g key={l}>
          <rect x={x} y={y} width={w} height={h} fill="#fff" stroke={strong ? RED : PINK} strokeWidth={strong ? 1.6 : 0.8} />
          <P x={x + 1.5} y={y + 1.5} w={w - 3} h={h - 3} />
          {up ? <rect x={x + 2} y={y + h * 0.38} width={w - 4} height={h * 0.24} fill="#fffff4" /> : <rect x={x + w * 0.36} y={y + 2} width={w * 0.28} height={h - 4} fill="#fffff4" />}
          <T x={x + w / 2} y={y + h / 2} r={up ? -90 : 0}>{l}</T>
        </g>
      ))}
      {dots.map(([x, y, r, l, up], i) => (
        <g key={i}><circle cx={x} cy={y} r={r} fill={Y} />{l && <T x={x} y={y} r={up ? -90 : 0}>{l}</T>}</g>
      ))}
      {captions.map(([x, y, l]) => <T key={l} x={x} y={y}>{l}</T>)}

      <Chip x={716} y={426} w={14} h={21} label="U5005" r={-90} />
      <Chip x={726} y={450} w={10} h={16} label="U5004" r={-90} />
      <Chip x={1119} y={290} w={15} h={20} label="U3403" />
      <Chip x={1201} y={301} w={14} h={20} label="U3402" />
      <Chip x={1114} y={326} w={14} h={15} label="U3401" />
      <Chip x={1032} y={456} w={26} h={26} label="U6301" />
      <Chip x={831} y={677} w={18} h={29} label="U2203" />
      <g transform="rotate(45 1228 316)"><rect x="1222" y="310" width="13" height="13" fill={Y} stroke={PINK} /></g>
      <T x={1229} y={314}>R3434</T><T x={1225} y={320}>R3435</T>
      <Red d="M1231 344H1236V349M1224 352V356H1229M1052 485H1060V478" w={2} />

      <path d="M1159 309H1179V313L1174 319H1164L1159 313ZM1159 336H1179V332L1174 327H1164L1159 332ZM1154 320H1159V326H1154ZM1179 320H1184V326H1179Z" fill={Y} />
      <Red d="M1155 318V309H1160M1178 309H1183V318M1155 328V336H1160M1178 336H1183V328" w={2} />
      <T x={1168} y={323}>J3401</T><circle cx="1175" cy="323" r="2" fill={RED} />

      <Socket y={374} label="J6501" />
      <Socket y={518} label="J6502" />

      {/* D2202 and J6203 */}
      <P x={638} y={516} w={14} h={13} /><P x={664} y={516} w={13} h={13} />
      <Red d="M646 517V514H669V517M646 528V531H669V528M652 514V531" /><T x={657} y={523}>D2202</T><T x={671} y={523} s={7} r={90} fill="#775">2</T>
      <Red d="M627 542V535H671V546M627 642V650H671V640M622 542V550L627 546Z" w={2} />
      {step(546, 7.7, 13).map((y) => <P key={y} x={629} y={y - 2} w={11} h={5} />)}
      {step(550, 7.7, 12).map((y) => <P key={y} x={667} y={y - 2} w={9} h={5} />)}
      <P x={632} y={536} w={16} h={4} /><P x={632} y={644} w={16} h={5} />
      <T x={650} y={593} r={-90}>J6203</T>

      {/* C2203 and U2102 */}
      <P x={696} y={531} w={13} h={10} /><P x={696} y={560} w={13} h={10} />
      <Red d="M694 539V562M710 539V562M694 539H710M694 556H710" />
      <T x={702} y={537} s={8} fill="#775">2</T><T x={702} y={565} s={8} fill="#775">1</T><T x={702} y={549} r={-90}>C2203</T>
      <P x={717} y={545} w={20} h={27} /><Red d="M714 545V573M739 545V573M712 570V574H717" />
      <path d="M717 544H738M717 571H738" stroke={RED} strokeWidth="2" strokeDasharray="3 3" /><T x={727} y={559} r={-90} w={700}>U2102</T>

      {/* J2102 */}
      <rect x="583" y="657" width="124" height="78" fill="none" stroke="#d8b0b8" />
      <path d="M583 686H612V712H598V727Q598 733 591 733T584 727ZM678 686H707V727Q706 733 699 733T692 727V712H678Z" fill={Y} />
      <Red d="M583 683V657H589M707 683V657H698M597 734H693" w={2} />
      {[[589, "1"], [628, "2"], [666, "3"]].map(([x, l]) => (
        <g key={l}><P x={x} y={654} w={30} h={17} /><T x={x + 15} y={663} s={11} fill="#666600">{l}</T></g>
      ))}
      <T x={591} y={718} s={10} r={-90} fill="#666600">4</T><T x={699} y={718} s={10} r={90} fill="#666600">5</T><T x={642} y={665}>J2102</T>
      <rect x="617" y="689" width="57" height="29" fill="none" stroke={RED} strokeWidth="1.600" />
      <P x={637} y={688} w={17} h={7} /><P x={637} y={711} w={17} h={7} />
      {[624, 631, 658, 665].map((x) => <g key={x}><P x={x - 2} y={691} w={4} h={6} /><P x={x - 2} y={709} w={4} h={6} /></g>)}
      <T x={645} y={692}>J2101</T>

      <P x={539} y={667} w={24} h={13} /><rect x="546" y="668" width="8" height="11" fill="#fffff4" /><Red d="M546 667H552M546 680H552M564 669V677" w={2} /><T x={550} y={674}>D2101</T>
      <P x={552} y={690} w={14} h={26} /><Red d="M554 688H563M552 700V706M566 700V706" w={2} /><T x={559} y={703} r={-90}>D2102</T>
      {[[529, 683, 20, 40, "R2121"], [787, 675, 21, 40, "R2110"]].map(([x, y, w, h, l]) => (
        <g key={l}>
          <rect x={x} y={y} width={w} height={h} fill={Y} stroke={PINK} />
          <rect x={x + 2} y={y + 15} width={w - 4} height="9" fill="#fffff4" />
          <T x={x + 10} y={y + 8} s={9} fill="#775">2</T><T x={x + 10} y={y + 33} s={9} fill="#775">1</T>
          <T x={x + 10} y={y + 20} r={-90}>{l}</T>
        </g>
      ))}

      {/* J6103 */}
      <path d="M972 617H980V630H968V621ZM1014 617H1023L1027 621V630H1014ZM968 642H980V655H972L968 651ZM1014 642H1027V651L1023 655H1014Z" fill={Y} />
      <Red d="M968 630V642M1027 630V642M980 622H1014M980 650H1014" />
      {step(986, 5.5, 5).map((x) => <g key={x}><P x={x - 1} y={617} w={3} h={7} /><P x={x - 1} y={648} w={3} h={7} /></g>)}
      <T x={997} y={638}>J6103</T>

      {/* J6101 */}
      <P x={1041} y={676} w={147} h={31} /><rect x="1058" y="683" width="114" height="17" fill="#fff" />
      <path d="M1058 679H1172M1058 703H1172" stroke={RED} strokeWidth="2" strokeDasharray="2 2" /><Red d="M1042 677V706M1187 677V706" />
      <T x={1114} y={694}>J6101</T>
    </Drawing>
  );
}

/* ---------- page ---------- */

export default function App() {
  return (
    <Window>
      <Global />
      <TitleBar>
        <AppMark><Seal $size={16} $height={16} $radius={2} $font={7} $line={7} $pad={1}>东震科技</Seal></AppMark>
        <WindowTitle>DZKJ Schematics</WindowTitle>
        <WindowButtons>
          <WindowButton aria-label="Minimize"><svg width="11" height="11"><path d="M1 7H10V10H1Z" /></svg></WindowButton>
          <WindowButton aria-label="Maximize"><svg width="11" height="11"><rect x="1" y="2" width="9" height="7" fill="none" stroke="#000" strokeWidth="2" /></svg></WindowButton>
          <WindowButton $close aria-label="Close">X</WindowButton>
        </WindowButtons>
      </TitleBar>

      <Banner>
        <BannerArt viewBox="0 0 1521 80" preserveAspectRatio="none" aria-hidden="true">
          <defs>
            <linearGradient id="beam" x1="1" y1="0" x2="0" y2="1"><stop offset="0" stopColor="#4408e8" /><stop offset="1" stopColor="#3008a0" stopOpacity=".3" /></linearGradient>
            <linearGradient id="shard" x1="0" y1="0" x2="1" y2="1"><stop offset="0" stopColor="#48a0c8" /><stop offset=".5" stopColor="#2a58a8" /><stop offset="1" stopColor="#3878d8" /></linearGradient>
            <linearGradient id="pink" x1="1" y1="0" x2="0" y2="1"><stop offset="0" stopColor="#c858e0" /><stop offset=".5" stopColor="#b058d8" /><stop offset="1" stopColor="#c878f0" /></linearGradient>
            <radialGradient id="glow"><stop offset="0" stopColor="#3090d0" stopOpacity=".8" /><stop offset="1" stopColor="#3090d0" stopOpacity="0" /></radialGradient>
          </defs>
          <path d="M255 0H298L160 80H118Z" fill="url(#beam)" />
          <path d="M205 0 125 50M170 0 130 26" stroke="#6048c0" opacity=".5" />
          <ellipse cx="437" cy="55" rx="12" ry="26" fill="url(#glow)" />
          <ellipse cx="25" cy="78" rx="26" ry="12" fill="url(#glow)" opacity=".6" />
          <path d="M465 0H499L577 80H509Z" fill="url(#shard)" />
          <path d="M465 0 509 80M500 4 577 80" stroke="#70b8f0" />
          <path d="M1117 0H1182L1135 80H1100V70Z" fill="url(#pink)" />
          <path d="M1213 0H1242L1196 40H1165ZM1285 0H1302L1262 38H1250Z" fill="#a850c8" opacity=".4" />
          <path d="M1324 61 1342 47 1354 58Z" fill="#a040c0" opacity=".6" />
        </BannerArt>
        <SealHolder><Seal $size={71} $height={60} $radius={5} $font={27} $line={27} $pad={8}>东震科技</Seal></SealHolder>
        <Brand>DZKJ Tools</Brand>
        <Slogan>Android + iPhone &amp; PCB Layout - Schematics</Slogan>
      </Banner>

      <Workspace>
        <SidePanel>
          <SideTabs role="tablist">
            <SideTab role="tab" $active $width={103}><PdfFileIcon large />Schematic</SideTab>
            <SideTab role="tab" $width={79}><PadsIcon />Layout</SideTab>
            <SideTab role="tab" $width={75}><CloudFolderIcon />Share</SideTab>
          </SideTabs>
          <TreeArea>
            <Tree>
              {names.map((n, i) => (
                <TreeRow key={n}><FolderIcon open={i === names.length - 1} /><TreeLabel $child={false}>TECNO {n}</TreeLabel></TreeRow>
              ))}
              {files.map((f, i) => (
                <TreeRow key={f} $child><PdfFileIcon /><TreeLabel $child $selected={i === 2}>{f}</TreeLabel></TreeRow>
              ))}
            </Tree>
            <Scroller before={201} thumb={76} after={363} />
            <Scroller horizontal before={23} thumb={172} after={0} />
          </TreeArea>
        </SidePanel>
        <Splitter><svg width="4" height="8"><path d="M0 0 4 4 0 8Z" fill="#e82010" /></svg></Splitter>

        <DocArea>
          <DocTabs role="tablist">
            <DocTab role="tab">Welcome</DocTab>
            <DocTab role="tab" $active>H6123_Main_PCB_V1.0_Placement<CloseMark>×</CloseMark></DocTab>
          </DocTabs>
          <ToolBar>
            <ToolButton aria-label="Copy"><CopyIcon /></ToolButton>
            <ToolButton aria-label="Rotate right"><TurnIcon /></ToolButton>
            <ToolButton aria-label="Rotate left"><TurnIcon flip /></ToolButton>
            <Divider />
            <Field>Page:<TextBox $width={39} $right defaultValue="2" /></Field>
            <PageCount>/ 2</PageCount>
            <ToolButton aria-label="Previous page"><I><path d="M14.500 2V16L3.500 9Z" fill="#f0bc48" stroke="#a87818" /></I></ToolButton>
            <Gap $w={2} />
            <ToolButton aria-label="Next page"><I><path d="M4 1V17L15 9Z" fill="#9c9c9c" /></I></ToolButton>
            <ToolButton aria-label="Fit width"><FitIcon /></ToolButton>
            <ToolButton aria-label="Fit page"><FitIcon all /></ToolButton>
            <ToolButton aria-label="Zoom out"><ZoomIcon /></ToolButton>
            <ToolButton aria-label="Zoom in"><ZoomIcon plus /></ToolButton>
            <Divider />
            <Field>Find:<TextBox $width={160} /></Field>
            <Gap $w={1} />
            <ToolButton aria-label="Find previous"><BinocularIcon /></ToolButton>
            <ToolButton aria-label="Find next"><BinocularIcon flip /></ToolButton>
            <ToolButton aria-label="Match case">
              <I><path d="M2 17 7 6 12 17M4 13H10" fill="none" stroke="#9c80f0" strokeWidth="1.500" /><text x="13" y="10" fontSize="10" fontWeight="700" textAnchor="middle" fill="#b84cb0" fontFamily="Open Sans">a</text></I>
            </ToolButton>
          </ToolBar>
          <Viewer>
            <Sheet><Board /></Sheet>
            <Scroller thick={16} before={321} thumb={321} after={0} />
          </Viewer>
        </DocArea>
      </Workspace>

      <StatusBar>
        <span>Version:1.0.0.52</span>
        <StatusDocument>Current [H6123_Main_PCB_V1.0_Placement]</StatusDocument>
      </StatusBar>
    </Window>
  );
}
